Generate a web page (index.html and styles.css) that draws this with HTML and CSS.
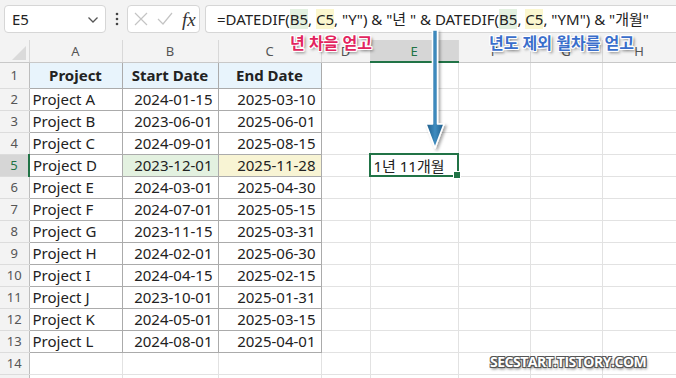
FILE: index.html
```html
<!DOCTYPE html>
<html>
<head>
  <title>DATEDIF</title>
  <link rel="stylesheet" href="styles.css">
</head>
<body>
  <div class="app">
    <div class="toolbar">
      <div class="namebox">
        <span>E5</span>
        <svg class="chevron" width="12" height="8" viewBox="0 0 12 8"><path d="M1.5 1.5 L6 6 L10.5 1.5" fill="none" stroke="#555" stroke-width="1.3"/></svg>
      </div>
      <div class="dots">
        <svg width="4" height="14" viewBox="0 0 4 14"><circle cx="2" cy="2" r="1.3" fill="#444"/><circle cx="2" cy="7" r="1.3" fill="#444"/><circle cx="2" cy="12" r="1.3" fill="#444"/></svg>
      </div>
      <div class="fxbox">
        <svg width="14" height="14" viewBox="0 0 14 14"><path d="M1 1 L13 13 M13 1 L1 13" stroke="#c4c4c4" stroke-width="1.2"/></svg>
        <svg width="16" height="14" viewBox="0 0 16 14"><path d="M1 7 L6 12 L15 1" fill="none" stroke="#c4c4c4" stroke-width="1.2"/></svg>
        <span class="fx">fx</span>
      </div>
      <div class="formula">=DATEDIF(<span class="ref-b">B5</span>, <span class="ref-c">C5</span>, "Y") &amp; "년 " &amp; DATEDIF(<span class="ref-b">B5</span>, <span class="ref-c">C5</span>, "YM") &amp; "개월"</div>
    </div>

    <table class="sheet">
      <colgroup>
        <col style="width:29px"><col style="width:93px"><col style="width:96px"><col style="width:103px">
        <col style="width:49px"><col style="width:88px"><col style="width:72px"><col style="width:72px"><col style="width:74px">
      </colgroup>
      <tr class="colhead">
        <th class="corner"><span class="tri"></span></th>
        <th>A</th><th>B</th><th>C</th><th>D</th><th class="active">E</th><th>F</th><th>G</th><th>H</th>
      </tr>
      <tr class="row1">
        <th class="rowhead">1</th>
        <td class="t head">Project</td><td class="t head">Start Date</td><td class="t head">End Date</td>
        <td></td><td></td><td></td><td></td><td></td>
      </tr>
      <tr><th class="rowhead">2</th><td class="t">Project A</td><td class="t num">2024-01-15</td><td class="t num">2025-03-10</td><td></td><td></td><td></td><td></td><td></td></tr>
      <tr><th class="rowhead">3</th><td class="t">Project B</td><td class="t num">2023-06-01</td><td class="t num">2025-06-01</td><td></td><td></td><td></td><td></td><td></td></tr>
      <tr><th class="rowhead">4</th><td class="t">Project C</td><td class="t num">2024-09-01</td><td class="t num">2025-08-15</td><td></td><td></td><td></td><td></td><td></td></tr>
      <tr><th class="rowhead active">5</th><td class="t">Project D</td><td class="t num hl-b">2023-12-01</td><td class="t num hl-c">2025-11-28</td><td></td><td class="sel">1년 11개월</td><td></td><td></td><td></td></tr>
      <tr><th class="rowhead">6</th><td class="t">Project E</td><td class="t num">2024-03-01</td><td class="t num">2025-04-30</td><td></td><td></td><td></td><td></td><td></td></tr>
      <tr><th class="rowhead">7</th><td class="t">Project F</td><td class="t num">2024-07-01</td><td class="t num">2025-05-15</td><td></td><td></td><td></td><td></td><td></td></tr>
      <tr><th class="rowhead">8</th><td class="t">Project G</td><td class="t num">2023-11-15</td><td class="t num">2025-03-31</td><td></td><td></td><td></td><td></td><td></td></tr>
      <tr><th class="rowhead">9</th><td class="t">Project H</td><td class="t num">2024-02-01</td><td class="t num">2025-06-30</td><td></td><td></td><td></td><td></td><td></td></tr>
      <tr><th class="rowhead">10</th><td class="t">Project I</td><td class="t num">2024-04-15</td><td class="t num">2025-02-15</td><td></td><td></td><td></td><td></td><td></td></tr>
      <tr><th class="rowhead">11</th><td class="t">Project J</td><td class="t num">2023-10-01</td><td class="t num">2025-01-31</td><td></td><td></td><td></td><td></td><td></td></tr>
      <tr><th class="rowhead">12</th><td class="t">Project K</td><td class="t num">2024-05-01</td><td class="t num">2025-03-15</td><td></td><td></td><td></td><td></td><td></td></tr>
      <tr><th class="rowhead">13</th><td class="t">Project L</td><td class="t num">2024-08-01</td><td class="t num">2025-04-01</td><td></td><td></td><td></td><td></td><td></td></tr>
      <tr><th class="rowhead">14</th><td></td><td></td><td></td><td></td><td></td><td></td><td></td><td></td></tr>
      <tr><th class="rowhead"></th><td></td><td></td><td></td><td></td><td></td><td></td><td></td><td></td></tr>
    </table>

    <!-- annotations drawn over the sheet -->
    <div class="label label-red">년 차을 얻고</div>
    <div class="label label-blue">년도 제외 월차를 얻고</div>
    <svg class="arrow" width="32" height="124" viewBox="0 0 32 124">
      <defs>
        <linearGradient id="shaft" x1="0" y1="0" x2="1" y2="0">
          <stop offset="0" stop-color="#1d5a86"/>
          <stop offset="0.5" stop-color="#3f8cc0"/>
          <stop offset="1" stop-color="#1d5a86"/>
        </linearGradient>
        <filter id="drop" x="-50%" y="-10%" width="200%" height="130%">
          <feDropShadow dx="2" dy="2" stdDeviation="1.5" flood-color="#000" flood-opacity="0.35"/>
        </filter>
      </defs>
      <path d="M13.5 2 L18.5 2 L18.5 96 L25 96 L16 120 L7 96 L13.5 96 Z" fill="url(#shaft)" stroke="#fff" stroke-width="1.6" stroke-linejoin="round" filter="url(#drop)"/>
    </svg>
    <div class="watermark">SECSTART.TISTORY.COM</div>
  </div>
</body>
</html>
```

FILE: styles.css
```css
* {
  margin: 0;
  padding: 0;
  box-sizing: border-box;
}

html, body {
  width: 100%;
  height: 100%;
  overflow: hidden;
  background: #fff;
}

.app {
  position: relative;
  width: 676px;
  height: 378px;
  overflow: hidden;
  font-family: "Noto Sans", "Noto Sans CJK KR", sans-serif;
  color: #222;
}

/* Formula bar */
.toolbar {
  height: 40px;
  display: flex;
  align-items: flex-start;
  padding: 5px 0 0 4px;
  background: #f3f3f3;
}

.namebox {
  width: 102px;
  height: 28px;
  display: flex;
  align-items: center;
  justify-content: space-between;
  padding: 0 6px 0 7px;
  background: #fff;
  border: 1px solid #d6d6d6;
  border-radius: 4px;
  font-size: 15px;
  color: #222;
}

.chevron {
  margin-top: 2px;
}

.dots {
  width: 21px;
  height: 28px;
  display: flex;
  align-items: center;
  justify-content: center;
}

.fxbox {
  width: 73px;
  height: 28px;
  display: flex;
  align-items: center;
  gap: 9px;
  padding-left: 6px;
  background: #fff;
  border: 1px solid #d6d6d6;
  border-radius: 4px;
}

.fx {
  font-family: "Liberation Serif", "DejaVu Serif", serif;
  font-style: italic;
  font-size: 19px;
  color: #333;
  line-height: 1;
}

.formula {
  flex: 1;
  height: 28px;
  margin-left: 5px;
  padding-left: 11px;
  line-height: 26px;
  white-space: nowrap;
  overflow: hidden;
  background: #fff;
  border: 1px solid #d6d6d6;
  border-right: none;
  border-radius: 4px 0 0 4px;
  font-size: 15px;
  color: #222;
}

.ref-b {
  background: #e3f1e0;
}

.ref-c {
  background: #fbf7cf;
}

/* Sheet grid */
.sheet {
  width: 676px;
  table-layout: fixed;
  border-collapse: collapse;
  font-size: 15px;
}

.sheet td {
  border: 1px solid #e2e2e2;
  height: 22px;
  padding: 0 3px;
  white-space: nowrap;
  overflow: visible;
}

.sheet tr {
  height: 22px;
}

.colhead {
  height: 21px;
}

.colhead th {
  height: 21px;
  background: #f3f3f3;
  border-right: 1px solid #d8d8d8;
  border-bottom: 1px solid #c8c8c8;
  font-weight: normal;
  font-size: 13px;
  color: #555;
}

.colhead th.active {
  background: #d6d6d6;
  color: #217346;
  border-bottom: 2px solid #217346;
}

.corner {
  position: relative;
}

.tri {
  position: absolute;
  right: 3px;
  bottom: 2px;
  width: 0;
  height: 0;
  border-left: 14px solid transparent;
  border-bottom: 14px solid #dadada;
}

.rowhead {
  background: #f3f3f3;
  border-right: 1px solid #bdbdbd;
  border-bottom: 1px solid #dcdcdc;
  font-weight: normal;
  font-size: 13px;
  color: #555;
  text-align: center;
}

.rowhead.active {
  background: #d6d6d6;
  color: #217346;
  border-right: 2px solid #217346;
}

.row1 {
  height: 26px;
}

.row1 td {
  height: 26px;
}

.sheet td.t {
  border-color: #ababab;
}

.sheet td.head {
  background: #e8f4fc;
  font-weight: bold;
  text-align: center;
}

.sheet td.num {
  text-align: right;
  padding-right: 5px;
}

.hl-b {
  background: #e3f1e0;
}

.hl-c {
  background: #f8f4d4;
}

.sheet td.sel {
  position: relative;
  outline: 2px solid #217346;
  outline-offset: -1px;
}

.sel::after {
  content: "";
  position: absolute;
  right: -3px;
  bottom: -3px;
  width: 6px;
  height: 6px;
  background: #217346;
  border: 1px solid #fff;
}

/* Annotations */
.label {
  position: absolute;
  top: 30px;
  font-weight: bold;
  font-size: 16px;
  white-space: nowrap;
  text-shadow:
    -1px -1px 0 #fff, 1px -1px 0 #fff, -1px 1px 0 #fff, 1px 1px 0 #fff,
    0 -1px 0 #fff, 0 1px 0 #fff, -1px 0 0 #fff, 1px 0 0 #fff,
    2px 2px 3px rgba(0, 0, 0, 0.55);
}

.label-red {
  left: 290px;
  color: #e2245e;
}

.label-blue {
  left: 489px;
  color: #3a6ecb;
}

.arrow {
  position: absolute;
  left: 419px;
  top: 28px;
}

.watermark {
  position: absolute;
  left: 490px;
  top: 352px;
  font-family: "Open Sans", sans-serif;
  font-weight: bold;
  font-size: 14px;
  letter-spacing: -0.5px;
  color: #fff;
  text-shadow:
    -1px -1px 0 #555, 1px -1px 0 #555, -1px 1px 0 #555, 1px 1px 0 #555,
    1px 2px 3px rgba(0, 0, 0, 0.6);
}
```
